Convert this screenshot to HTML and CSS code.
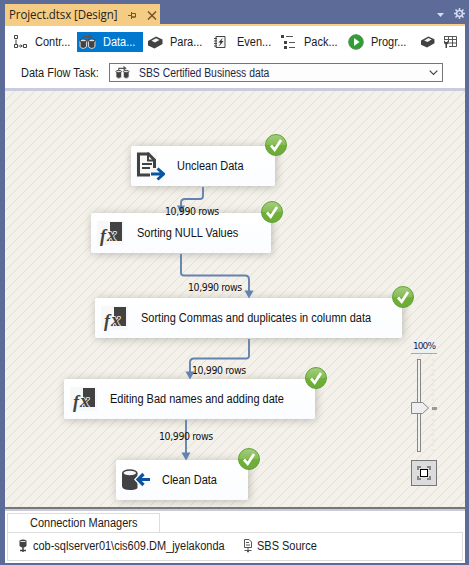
FILE: index.html
```html
<!DOCTYPE html>
<html lang="en">
<head>
<meta charset="utf-8">
<title>Project.dtsx [Design]</title>
<link rel="stylesheet" href="styles.css">
</head>
<body>
<svg class="defs" width="0" height="0">
  <defs>
    <linearGradient id="green" x1="0" y1="0" x2="0" y2="1"><stop offset="0" stop-color="#a5cd80"/><stop offset=".48" stop-color="#85bd55"/><stop offset=".52" stop-color="#6fb038"/><stop offset="1" stop-color="#6cab38"/></linearGradient>
    <symbol id="check" viewBox="0 0 22 22"><circle cx="11" cy="11" r="10.5" fill="url(#green)" stroke="#61a233"/><path d="M6 11.5l3.7 4.3L16 6" fill="none" stroke="#fff" stroke-width="2.7"/></symbol>
    <symbol id="fx" viewBox="0 0 30 30"><path d="M2 3h27v24H2z" fill="#f8f8f8"/><path d="M15 4h12v19H15z" fill="#424242"/><text x="5" y="23.500" class="fx-f">f</text><text x="12" y="22.500" class="fx-x">x</text></symbol>
    <symbol id="flow" viewBox="0 0 16 14"><path d="M1 6h6v6q-3 3-6 0zM9 6h6v6q-3 3-6 0z" fill="#424242" stroke="#f3f3f3" stroke-width=".8"/><ellipse cx="4" cy="6" rx="3" ry="1.300" fill="#ddd" stroke="#424242"/><ellipse cx="12" cy="6" rx="3" ry="1.300" fill="#ddd" stroke="#424242"/><path d="M4 4.500V2.500H11M9 .5l2.500 2L9 4.500" fill="none" stroke="#555" stroke-width="1.200"/></symbol>
    <symbol id="box" viewBox="0 0 16 14"><path d="M1 6l8-4.500L15.500 4.500v4.500l-8 4.500L1 10.500z" fill="#424242"/><path d="M4.500 5.800L9 3.300l3.500 1.600L8 7.500z" fill="#f4f4f4"/></symbol>
  </defs>
</svg>
<div class="window">
  <header class="titlebar">
    <div class="doc-tab"><span class="doc-name">Project.dtsx [Design]</span>
      <svg class="pin" width="9" height="7" viewBox="0 0 9 7"><path d="M0 3.500h3M3.500 0v7M3.500 1.500h4v3.500h-4M3.500 5h4" fill="none" stroke="#75552a"/></svg>
      <svg class="close" width="10" height="9" viewBox="0 0 10 9"><path d="M1 .5l8 8M9 .5l-8 8" stroke="#75552a" stroke-width="1.500"/></svg>
    </div>
    <svg class="caret" width="7" height="4" viewBox="0 0 7 4"><path d="M0 0h7L3.500 4z" fill="#d4dbf0"/></svg>
    <svg class="gear" width="11" height="11" viewBox="0 0 11 11"><circle cx="5.500" cy="5.500" r="3" fill="none" stroke="#d4dbf0" stroke-width="1.700"/><path d="M5.500 0v2M5.500 9v2M0 5.500h2M9 5.500h2M1.500 1.500l1.500 1.500M8 8l1.500 1.500M9.500 1.500L8 3M3 8L1.500 9.500" stroke="#d4dbf0" stroke-width="1.500"/><circle cx="5.500" cy="5.500" r=".7" fill="#d4dbf0"/></svg>
  </header>
  <main class="designer">
    <nav class="tabs">
      <div class="tab"><svg width="15" height="15" viewBox="0 0 15 15"><path d="M1.500 1.500h3v3h-3zM1.500 10.500h3v3h-3zM10.500 10.500h3v3h-3z" fill="none" stroke="#424242"/><path d="M3 5.500v5M5.500 12h4M7.500 10.500L9 12l-1.500 1.500" stroke="#424242" fill="none"/></svg><span class="t">Contr...</span></div>
      <div class="tab active"><svg width="17" height="15" viewBox="0 0 16 14"><use href="#flow"/></svg><span class="t">Data...</span></div>
      <div class="tab"><svg width="16" height="14"><use href="#box"/></svg><span class="t">Para...</span></div>
      <div class="tab even"><svg width="12" height="14" viewBox="0 0 12 14"><path d="M2 1.500h9v11H2zM0 3.500h3M0 6h3M0 8.500h3M0 11h3" fill="#f5f5f5" stroke="#424242"/><path d="M8.500 3L4.500 7.500h2L5 11.500l4.500-5.500h-2z" fill="#333"/></svg><span class="t">Even...</span></div>
      <div class="tab pack"><svg width="15" height="15" viewBox="0 0 15 15"><path d="M0 1h3v3H0zM3 7h3v3H3zM3 12h3v3H3z" fill="#424242"/><path d="M5 2.500h7M8 8.500h6M8 13.500h6" stroke="#555"/></svg><span class="t">Pack...</span></div>
      <div class="tab"><svg width="16" height="16" viewBox="0 0 16 16"><circle cx="8" cy="8" r="7.300" fill="#2e9f35" stroke="#5c8b5c"/><path d="M6 4l5.500 4L6 12z" fill="#fff"/></svg><span class="t">Progr...</span></div>
      <svg class="tool-box" width="15" height="13"><use href="#box"/></svg>
      <svg class="tool-grid" width="14" height="14" viewBox="0 0 14 14"><path d="M1 1.500h12.500v10H6M1.500 1v3M1 4.500h12.500M5 8h8.500M5.500 1v6M9.500 1v10" fill="none" stroke="#555"/><path d="M1 5v3l1.500 1.500V13h1.500V9.500L5.500 8V5l-1.500 2H2.500z" fill="#424242"/></svg>
    </nav>
    <div class="task-row">
      <span class="task-label t">Data Flow Task:</span>
      <div class="select"><svg width="15" height="13"><use href="#flow"/></svg><span class="t">SBS Certified Business data</span><svg class="chev" width="9" height="6" viewBox="0 0 9 6"><path d="M.7.7l3.800 3.800L8.300.7" fill="none" stroke="#444" stroke-width="1.200"/></svg></div>
    </div>
    <section class="canvas">
      <svg class="hatch" width="460" height="416"><defs><pattern id="stripes" width="10" height="10" patternUnits="userSpaceOnUse"><path d="M-1 11L11-1M-1 1L1-1M9 11L11 9" stroke="#dedbd3" stroke-width=".8"/></pattern></defs><rect width="460" height="416" fill="url(#stripes)"/></svg>
      <div class="node n1"><svg width="30" height="30" viewBox="-1 -.5 30 30"><path d="M0 0h21v25H0z" fill="#f8f8f8"/><path d="M2.500 2.500h10l6 6v8M2.500 1v22.500H14" fill="none" stroke="#424242" stroke-width="3"/><path d="M12 1v8h8M6 12.500h10M6 16.500h8" fill="none" stroke="#424242" stroke-width="2"/><path d="M15 22.500h12M21.500 17l6 5.500-6 5.500" fill="none" stroke="#0b55a0" stroke-width="3"/></svg><span class="t">Unclean Data</span><svg class="ok" width="22" height="22"><use href="#check"/></svg></div>
      <div class="node n2"><svg width="30" height="30"><use href="#fx"/></svg><span class="t">Sorting NULL Values</span><svg class="ok" width="22" height="22"><use href="#check"/></svg></div>
      <div class="node n3"><svg width="30" height="30"><use href="#fx"/></svg><span class="t">Sorting Commas and duplicates in column data</span><svg class="ok" width="22" height="22"><use href="#check"/></svg></div>
      <div class="node n4"><svg width="30" height="30"><use href="#fx"/></svg><span class="t">Editing Bad names and adding date</span><svg class="ok" width="22" height="22"><use href="#check"/></svg></div>
      <div class="node n5"><svg width="30" height="22" viewBox="-2 0 30 22"><path d="M0 4v13q0 4 8 4 6 0 7.500-2V4z" fill="#424242"/><ellipse cx="7.800" cy="4" rx="7" ry="3" fill="#f5f5f5" stroke="#424242" stroke-width="1.600"/><path d="M12 10.500l7-7.500 4 4h5v7h-5l-4 4z" fill="#fff"/><path d="M28 10.500H16M21.500 5L16 10.500l5.500 5.500" fill="none" stroke="#0b55a0" stroke-width="3.200"/></svg><span class="t">Clean Data</span><svg class="ok" width="22" height="22"><use href="#check"/></svg></div>
      <svg class="edges" width="460" height="416" viewBox="5 91 460 416">
        <g fill="none" stroke="#6482b0" stroke-width="1.900"><path d="M203 187v9q0 3-3 3h-15q-4 0-4 4v4"/><path d="M181 254v19q0 2.500 3 2.500h61q4 0 4 4v12"/><path d="M249 339v17q0 2.500-3 2.500h-52q-4 0-4 4v10"/><path d="M186 420v33"/></g>
        <path d="M177 205.500h8l-4 8zM244.500 290.500h9l-4.500 8zM185.500 371.500h9l-4.500 8zM181.500 452.500h9l-4.500 8z" fill="#6482b0"/>
      </svg>
      <span class="rows r1">10,990 rows</span><span class="rows r2">10,990 rows</span><span class="rows r3">10,990 rows</span><span class="rows r4">10,990 rows</span>
      <div class="zoom">
        <span class="pct">100%</span>
        <svg width="28" height="99" viewBox="0 0 28 99"><path d="M22 1.500v92" stroke="#dedfd9" stroke-width="3" stroke-dasharray="1 4"/><rect x="6.500" y="1.500" width="3" height="92" fill="#f1f1f1" stroke="#868686"/><path d="M.5 44.500h11l6 5.500-6 5.500H.5z" fill="#eee" stroke="#868686"/><path d="M21 49h5v3h-5z" fill="#999"/></svg>
        <div class="fit"><svg width="14" height="14" viewBox="0 0 14 14"><path d="M1 4V1h3M10 1h3v3M13 10v3h-3M4 13H1v-3" fill="none" stroke="#888" stroke-width="2"/><rect x="3.500" y="3.500" width="7" height="7" fill="#fff" stroke="#000"/></svg></div>
      </div>
    </section>
    <footer class="connections">
      <div class="conn-tab"><span class="t">Connection Managers</span></div>
      <div class="conn-list">
        <div class="conn c1"><svg width="8" height="14" viewBox="0 0 8 14"><path d="M.5 1.500q3.500-2 7 0V7q-3.500 3-7 0z" fill="#424242"/><path d="M1.500 2.500h5" stroke="#ddd"/><path d="M4 8v5M1 11.500h6" stroke="#424242" stroke-width="1.500"/></svg><span class="t">cob-sqlserver01\cis609.DM_jyelakonda</span></div>
        <div class="conn c2"><svg width="8" height="14" viewBox="0 0 8 14"><path d="M.5.5h4.500l2.500 2.500v5.500h-7zM2 3.500h3M2 6h4M4 8.500v5M.5 11.500h7M3 12.500h2" fill="none" stroke="#555"/></svg><span class="t">SBS Source</span></div>
      </div>
    </footer>
  </main>
</div>
</body>
</html>
```

FILE: styles.css
```css
* { box-sizing: border-box; }
body { margin: 0; width: 469px; height: 565px; overflow: hidden; background: #5d6b99; font: 12px/16px "Liberation Sans", Arial, sans-serif; color: #1b1b1b; }
svg { display: block; flex: none; }
span { white-space: nowrap; }
.t { display: inline-block; transform: scaleX(.915); transform-origin: left center; }
.defs { position: absolute; }
.window { display: flex; flex-direction: column; padding: 5px 4px 2px 5px; height: 565px; }
.titlebar { display: flex; align-items: center; height: 21px; border-bottom: 2px solid #ffcc80; }
.doc-tab { display: flex; align-items: center; width: 156px; height: 21px; padding: 1px 0 0 4px; background: #f5cc84; }
.doc-name { width: 119px; font: 12px/18px "Open Sans", sans-serif; color: #26231d; letter-spacing: -.08px; transform: scaleX(.957); transform-origin: left center; }
.close { margin-left: 10px; }
.caret { margin-left: 277px; }
.gear { margin-left: 10px; margin-top: -2px; }
.designer { display: flex; flex-direction: column; flex: 1; background: #fff; }
.tabs { display: flex; align-items: center; height: 30px; padding: 3px 0 2px 8px; }
.tab { display: flex; align-items: center; height: 20px; width: 67px; }
.tab:first-child { width: 64px; }
.tab span { margin-left: 7px; }
.tab.active { width: 66px; padding-left: 2px; margin-right: 4px; background: #0078d0; color: #fff; }
.tab.even span { margin-left: 11px; }
.tab.pack span { margin-left: 8px; }
.tool-box { margin-left: 5px; }
.tool-grid { margin-left: 8px; }
.task-row { display: flex; align-items: center; height: 35px; padding: 1px 0 0 16px; border-bottom: 3px solid #c8ccdc; }
.task-label { width: 88px; }
.select { display: flex; align-items: center; width: 334px; height: 19px; padding-left: 5px; border: 1px solid #757575; background: #fdfdfd; color: #1d2747; }
.select span { margin-left: 9px; transform: scaleX(.865); }
.chev { margin-left: auto; margin-right: 4px; }
.canvas { position: relative; height: 416px; background: #f4f1ea; overflow: hidden; }
.hatch, .edges { position: absolute; left: 0; top: 0; }
.node { position: absolute; display: flex; align-items: center; height: 40px; padding-left: 4px; border-radius: 2px; background: linear-gradient(#fff, #fafcff); box-shadow: 1px 1px 9px rgba(70,70,60,.33); color: #111; }
.node span { margin-left: 12px; }
.n1 { left: 126px; top: 55px; width: 144px; }
.n2 { left: 86px; top: 122px; width: 180px; }
.n3 { left: 90px; top: 207px; width: 307px; }
.n4 { left: 59px; top: 288px; width: 251px; }
.n5 { left: 111px; top: 369px; width: 132px; }
.ok { position: absolute; right: -12px; top: -12px; }
.fx-f { font: italic bold 18px "Liberation Serif", serif; fill: #424242; }
.fx-x { font: italic bold 19px "Liberation Serif", serif; fill: #424242; stroke: #f4f4f4; stroke-width: 1.6px; paint-order: stroke; }
.rows { position: absolute; font: 10px/12px "DejaVu Sans", sans-serif; color: #111; letter-spacing: -.4px; transform: scaleX(.94); transform-origin: left center; }
.r1 { left: 160px; top: 115px; }
.r2 { left: 183px; top: 191px; }
.r3 { left: 187px; top: 274px; }
.r4 { left: 154px; top: 340px; }
.zoom { position: absolute; left: 406px; top: 249px; width: 26px; }
.pct { display: block; height: 14px; margin-bottom: 4px; border-bottom: 1px solid #aaa; background: #edf0f2; font: 9px/12px "DejaVu Sans", sans-serif; letter-spacing: -.9px; text-align: center; color: #1d2747; }
.fit { display: flex; align-items: center; justify-content: center; width: 26px; height: 26px; margin-top: 3px; border: 1px solid #777; background: #dcdcdc; }
.connections { display: flex; flex-direction: column; height: 56px; padding: 4px 2px 0 2px; border-top: 2px solid #777; box-shadow: inset 0 2px #c8ccdc; }
.conn-tab { width: 153px; height: 19px; padding-left: 22px; border: 1px solid #ddd; border-bottom: 0; line-height: 19px; }
.conn-list { display: flex; height: 29px; border: 1px solid #ddd; }
.conn { display: flex; align-items: center; height: 26px; padding-left: 11px; }
.conn span { margin-left: 6px; }
.c1 { width: 225px; }
.c2 span { margin-left: 5px; }
```
